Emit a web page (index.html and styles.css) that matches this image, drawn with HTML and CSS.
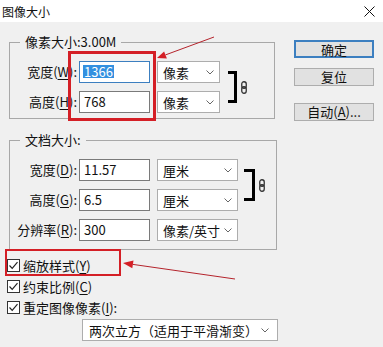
FILE: index.html
```html
<!DOCTYPE html>
<html lang="zh-CN">
<head>
  <meta charset="UTF-8">
  <meta name="viewport" content="width=device-width, initial-scale=1.0">
  <title>图像大小</title>
  <link rel="stylesheet" href="styles.css">
</head>
<body>
  <div class="titlebar">
    <span class="title">图像大小</span>
    <svg class="close" width="11" height="11" viewBox="0 0 11 11">
      <path d="M0.5 0.5L10.5 10.5M10.5 0.5L0.5 10.5" stroke="#111" stroke-width="1"/>
    </svg>
  </div>

  <div class="content">
    <div class="left">
      <fieldset class="group group-pixel">
        <legend>像素大小:3.00M</legend>
        <div class="grid">
          <div class="bracket"></div>
          <svg class="link" width="6" height="13" viewBox="0 0 6 13">
            <rect x="0.75" y="0.75" width="4.5" height="6.5" rx="2.2" fill="none" stroke="#333" stroke-width="1.3"/>
            <rect x="0.75" y="5.75" width="4.5" height="6.5" rx="2.2" fill="none" stroke="#333" stroke-width="1.3"/>
          </svg>

          <label class="lbl">宽度(<u>W</u>):</label>
          <div class="field focused"><span class="sel">1366</span></div>
          <div class="dropdown">像素<svg class="chev" width="8" height="5" viewBox="0 0 8 5"><path d="M0.5 0.5L4 4L7.5 0.5" fill="none" stroke="#666"/></svg></div>

          <label class="lbl">高度(<u>H</u>):</label>
          <div class="field">768</div>
          <div class="dropdown">像素<svg class="chev" width="8" height="5" viewBox="0 0 8 5"><path d="M0.5 0.5L4 4L7.5 0.5" fill="none" stroke="#666"/></svg></div>
        </div>
      </fieldset>

      <fieldset class="group group-doc">
        <legend>文档大小:</legend>
        <div class="grid">
          <div class="bracket"></div>
          <svg class="link" width="6" height="13" viewBox="0 0 6 13">
            <rect x="0.75" y="0.75" width="4.5" height="6.5" rx="2.2" fill="none" stroke="#333" stroke-width="1.3"/>
            <rect x="0.75" y="5.75" width="4.5" height="6.5" rx="2.2" fill="none" stroke="#333" stroke-width="1.3"/>
          </svg>

          <label class="lbl">宽度(<u>D</u>):</label>
          <div class="field">11.57</div>
          <div class="dropdown">厘米<svg class="chev" width="8" height="5" viewBox="0 0 8 5"><path d="M0.5 0.5L4 4L7.5 0.5" fill="none" stroke="#666"/></svg></div>

          <label class="lbl">高度(<u>G</u>):</label>
          <div class="field">6.5</div>
          <div class="dropdown">厘米<svg class="chev" width="8" height="5" viewBox="0 0 8 5"><path d="M0.5 0.5L4 4L7.5 0.5" fill="none" stroke="#666"/></svg></div>

          <label class="lbl">分辨率(<u>R</u>):</label>
          <div class="field">300</div>
          <div class="dropdown">像素/英寸<svg class="chev" width="8" height="5" viewBox="0 0 8 5"><path d="M0.5 0.5L4 4L7.5 0.5" fill="none" stroke="#666"/></svg></div>
        </div>
      </fieldset>

      <div class="checks">
        <div class="check"><span class="box"><svg width="11" height="11" viewBox="0 0 11 11"><path d="M1.5 5.5L4.2 8.3L9.5 2.2" fill="none" stroke="#222" stroke-width="1.2"/></svg></span>缩放样式(<u>Y</u>)</div>
        <div class="check"><span class="box"><svg width="11" height="11" viewBox="0 0 11 11"><path d="M1.5 5.5L4.2 8.3L9.5 2.2" fill="none" stroke="#222" stroke-width="1.2"/></svg></span>约束比例(<u>C</u>)</div>
        <div class="check"><span class="box"><svg width="11" height="11" viewBox="0 0 11 11"><path d="M1.5 5.5L4.2 8.3L9.5 2.2" fill="none" stroke="#222" stroke-width="1.2"/></svg></span>重定图像像素(<u>I</u>):</div>
      </div>

      <div class="dropdown resample">两次立方（适用于平滑渐变）<svg class="chev" width="8" height="5" viewBox="0 0 8 5"><path d="M0.5 0.5L4 4L7.5 0.5" fill="none" stroke="#666"/></svg></div>
    </div>

    <div class="buttons">
      <button class="btn btn-default">确定</button>
      <button class="btn">复位</button>
      <button class="btn btn-auto">自动(<u>A</u>)...</button>
    </div>
  </div>

  <!-- red annotation marks drawn over the dialog -->
  <svg class="marks" width="383" height="347" viewBox="0 0 383 347">
    <rect x="69.5" y="52.5" width="85" height="67" fill="none" stroke="#d41f26" stroke-width="3"/>
    <rect x="6" y="250" width="114" height="25" fill="none" stroke="#d41f26" stroke-width="2"/>
    <line x1="214" y1="37" x2="165.5" y2="54.9" stroke="#b5242c" stroke-width="1"/>
    <polygon points="157,58 166.9,58.4 164.1,51.4" fill="#d41f26"/>
    <line x1="235" y1="279" x2="132.9" y2="264.4" stroke="#b5242c" stroke-width="1"/>
    <polygon points="123,263 133.5,260.6 132.3,268.2" fill="#d41f26"/>
  </svg>
</body>
</html>
```

FILE: styles.css
```css
body {
  margin: 0;
  width: 383px;
  height: 347px;
  overflow: hidden;
  position: relative;
  background-color: #f0f0f0;
  color: #111;
  font-family: "Noto Sans CJK SC", "Microsoft YaHei", sans-serif;
  font-size: 13px;
}
u {
  text-decoration-thickness: 1px;
  text-underline-offset: 2px;
}
.titlebar {
  height: 22px;
  background-color: #fff;
  display: flex;
  align-items: center;
  justify-content: space-between;
  padding: 0 8px 0 2px;
  font-size: 12px;
}
.content {
  display: flex;
  padding: 12px 0 0 9px;
}
.left {
  width: 268px;
  display: flex;
  flex-direction: column;
}
.group {
  margin: 0;
  border: 1px solid #a8a8a8;
  padding: 11px 0 5px 6px;
  min-width: 0;
}
.group legend {
  margin-left: 4px;
  padding: 0 5px;
  line-height: 16px;
}
.group-pixel {
  width: 266px;
  box-sizing: border-box;
}
.group-doc {
  margin-top: 13px;
  padding-bottom: 8px;
  box-sizing: border-box;
}
.grid {
  display: grid;
  grid-template-rows: 22px;
  grid-auto-rows: 22px;
  row-gap: 8px;
}
.group-pixel .grid {
  grid-template-columns: 63px 71px 70px 17px 10px;
}
.group-doc .grid {
  grid-template-columns: 63px 71px 88px 17px 10px;
}
.lbl {
  text-align: right;
  padding-right: 2px;
  line-height: 22px;
  white-space: nowrap;
}
.field {
  box-sizing: border-box;
  height: 22px;
  border: 1px solid #7a7a7a;
  background-color: #fff;
  padding-left: 4px;
  line-height: 20px;
}
.field.focused {
  border-color: #3c7fc0;
}
.sel {
  display: inline-block;
  background-color: #3390e0;
  color: #fff;
  line-height: 13px;
  padding: 0 1px;
  margin-left: -1px;
}
.dropdown {
  box-sizing: border-box;
  height: 22px;
  margin-left: 7px;
  border: 1px solid #adadad;
  background-color: #fff;
  display: flex;
  align-items: center;
  justify-content: space-between;
  padding: 0 5px 0 5px;
  white-space: nowrap;
}
.chev {
  margin-top: 1px;
}
.bracket {
  grid-column: 4;
  grid-row: 1 / span 2;
  margin: 10px 0 10px 8px;
  border: 3px solid #000;
  border-left: none;
}
.group-doc .bracket {
  margin-left: 6px;
  width: 8px;
}
.link {
  grid-column: 5;
  grid-row: 1 / span 2;
  align-self: center;
  margin-left: 4px;
}
.checks {
  display: flex;
  flex-direction: column;
  gap: 3px;
  margin-top: 6px;
}
.check {
  height: 18px;
  display: flex;
  align-items: center;
  margin-left: -2px;
  white-space: nowrap;
}
.box {
  box-sizing: border-box;
  width: 13px;
  height: 13px;
  border: 1px solid #333;
  background-color: #fff;
  margin-right: 3px;
  display: flex;
  align-items: center;
  justify-content: center;
}
.resample {
  width: 196px;
  margin-left: 73px;
  margin-top: 3px;
  padding-left: 6px;
  padding-right: 8px;
}
.buttons {
  display: flex;
  flex-direction: column;
  margin-left: 17px;
  padding-top: 6px;
}
.btn {
  box-sizing: border-box;
  width: 80px;
  height: 18px;
  padding: 0;
  border: 1px solid #adadad;
  background-color: #e1e1e1;
  font-family: inherit;
  font-size: 13px;
  line-height: 16px;
  color: #111;
  margin-bottom: 10px;
}
.btn-default {
  border: 2px solid #3c7fc0;
}
.btn-auto {
  margin-top: 7px;
}
.marks {
  position: absolute;
  top: 0;
  left: 0;
  pointer-events: none;
}
```
